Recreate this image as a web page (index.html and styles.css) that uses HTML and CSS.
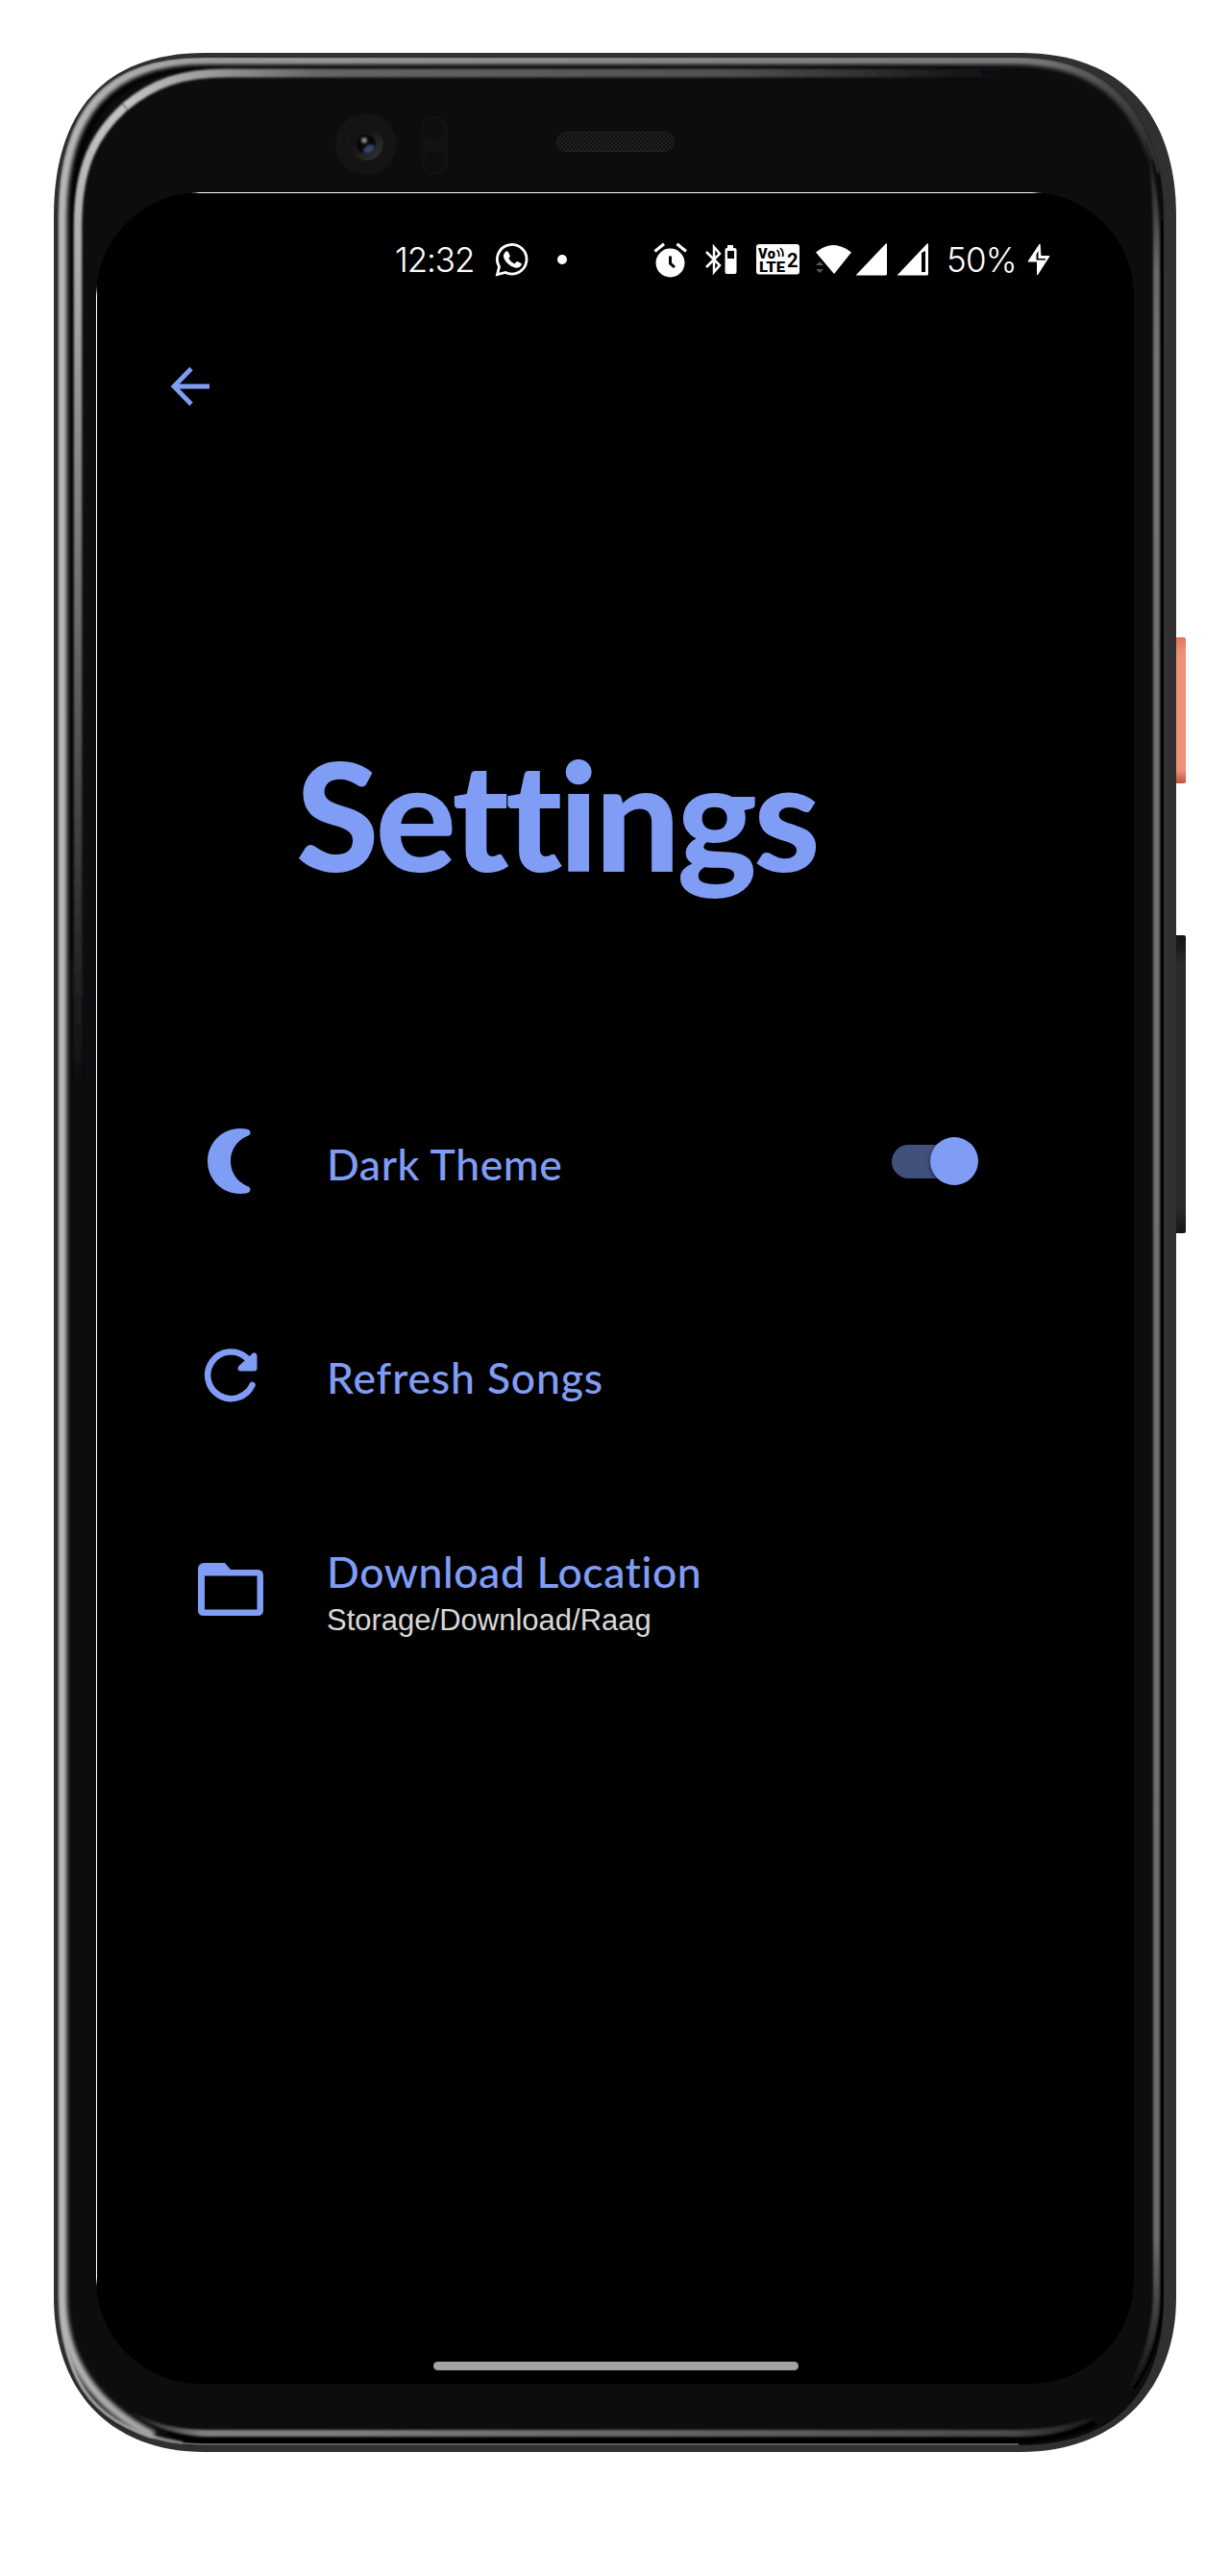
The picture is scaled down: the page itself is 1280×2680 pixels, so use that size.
FILE: index.html
```html
<!DOCTYPE html>
<html lang="en">
<head>
<meta charset="utf-8">
<title>Settings</title>
<link rel="stylesheet" href="styles.css">
</head>
<body>
<div class="stage">
  <svg class="frame" viewBox="0 0 1280 2680" width="1280" height="2680" aria-hidden="true">
    <defs>
      <filter id="soft" filterUnits="userSpaceOnUse" x="0" y="0" width="1280" height="2680"><feGaussianBlur stdDeviation="2.2"/></filter>
      <filter id="soft1" filterUnits="userSpaceOnUse" x="0" y="0" width="1280" height="2680"><feGaussianBlur stdDeviation="0.8"/></filter>
      <linearGradient id="leftBand" gradientUnits="userSpaceOnUse" x1="0" y1="105" x2="0" y2="1130">
        <stop offset="0" stop-color="#c4c4c4"/><stop offset=".24" stop-color="#a0a0a0"/><stop offset=".55" stop-color="#686868"/><stop offset="1" stop-color="#0d0d0f"/>
      </linearGradient>
      <linearGradient id="topBand" gradientUnits="userSpaceOnUse" x1="130" y1="0" x2="1040" y2="0">
        <stop offset="0" stop-color="#c4c4c4"/><stop offset=".1" stop-color="#999"/><stop offset=".22" stop-color="#666"/><stop offset=".7" stop-color="#505050"/><stop offset="1" stop-color="#0d0d0f"/>
      </linearGradient>
      <linearGradient id="rim" gradientUnits="userSpaceOnUse" x1="60" y1="0" x2="1195" y2="0">
        <stop offset="0" stop-color="#b8b8b8"/><stop offset=".15" stop-color="#999"/><stop offset=".9" stop-color="#777"/><stop offset="1" stop-color="#333"/>
      </linearGradient>
      <linearGradient id="rightBand" gradientUnits="userSpaceOnUse" x1="0" y1="140" x2="0" y2="2492">
        <stop offset="0" stop-color="#0d0d0f"/><stop offset=".06" stop-color="#69696b"/><stop offset=".1" stop-color="#747476"/><stop offset=".93" stop-color="#6c6c6e"/><stop offset="1" stop-color="#0d0d0f"/>
      </linearGradient>
      <linearGradient id="bottomBand" gradientUnits="userSpaceOnUse" x1="130" y1="0" x2="1152" y2="0">
        <stop offset="0" stop-color="#0d0d0f"/><stop offset=".08" stop-color="#808080"/><stop offset=".2" stop-color="#7e7e7e"/><stop offset=".9" stop-color="#4c4c4c"/><stop offset="1" stop-color="#0d0d0f"/>
      </linearGradient>
      <linearGradient id="coral" x1="0" y1="0" x2="0" y2="1">
        <stop offset="0" stop-color="#e2755f"/><stop offset=".11" stop-color="#ef9179"/><stop offset=".91" stop-color="#ef9179"/><stop offset="1" stop-color="#b95443"/>
      </linearGradient>
      <linearGradient id="ink" x1="0" y1="0" x2="0" y2="1">
        <stop offset="0" stop-color="#121212"/><stop offset=".1" stop-color="#2b2b2b"/><stop offset=".91" stop-color="#2b2b2b"/><stop offset="1" stop-color="#141414"/>
      </linearGradient>
      <linearGradient id="lensRing" x1="0" y1="0" x2="1" y2="1"><stop offset=".3" stop-color="#121212"/><stop offset="1" stop-color="#35353a"/></linearGradient>
      <pattern id="mesh" width="4" height="4" patternUnits="userSpaceOnUse"><path fill="#0e0e0e" d="M0 0h4v4H0z"/><path fill="#222" d="M0 0h2v2H0zM2 2h2v2H2z"/></pattern>
      <clipPath id="inner"><path d="M60 225C60 110 110 60 213 60H1060C1160 60 1211 125 1211 225V2390C1211 2490 1160 2544 1060 2544H213C110 2544 60 2490 60 2390Z"/></clipPath>
    </defs>
    <rect x="1220" y="663" width="14" height="152" rx="2" fill="url(#coral)"/>
    <rect x="1220" y="973" width="14" height="310" rx="2" fill="url(#ink)"/>
    <path fill="#303030" d="M56 225C56 117 108 55 213 55H1062C1168 55 1224 119 1224 225V2390C1224 2488 1160 2551 1062 2551H213C115 2551 56 2488 56 2390Z"/>
    <g clip-path="url(#inner)" fill="none">
      <path fill="#0d0d0f" d="M50 50H1224V2560H50z"/>
      <path filter="url(#soft)" stroke="#030303" stroke-width="5" d="M76 1000V225C76 122 120 70 215 70H1000"/>
      <path filter="url(#soft)" stroke="url(#rim)" stroke-width="9" d="M160 2534C92 2500 65 2450 65 2390V225C65 118 113 62.500 213 62.500H1055C1140 63 1180 105 1200 165"/>
      <path filter="url(#soft1)" stroke="url(#rim)" stroke-width="3.500" d="M190 2542C100 2528 64 2480 64 2390V225C64 113 113 63 213 63H1058C1145 62 1190 110 1206 180"/>
      <path filter="url(#soft1)" stroke="#000" stroke-width="7" d="M175 2530C188 2536 205 2539 220 2539H1060C1090 2539 1120 2530 1140 2521"/>
      <path stroke="#777" stroke-width="1.5" d="M170 2539Q190 2543 213 2543H1060"/>
      <path filter="url(#soft1)" stroke="url(#leftBand)" stroke-width="8.5" d="M81 1130V235C81 174 98 140 130 111"/>
      <path filter="url(#soft1)" stroke="url(#topBand)" stroke-width="9" d="M130 111C160 86 190 76 235 76H1040"/>
      <path filter="url(#soft1)" fill="url(#rightBand)" d="M1192 145C1203 180 1207 220 1207 250V2390C1207 2435 1187 2475 1170 2494C1192 2450 1200 2420 1200 2380V250C1200 210 1198 175 1192 145Z"/>
      <path stroke="#020202" stroke-width="3" d="M1209.500 230V2390Q1209 2445 1180 2485"/>
      <path filter="url(#soft1)" fill="url(#bottomBand)" d="M130 2506C165 2524 188 2528 220 2528H1060C1100 2527 1125 2519 1152 2509C1120 2529 1095 2535 1060 2535H220C190 2535 160 2528 130 2506Z"/>
    </g>
    <circle cx="381" cy="150" r="32" fill="#141414"/>
    <circle cx="381.500" cy="150" r="17" fill="url(#lensRing)"/>
    <circle cx="381" cy="150" r="10" fill="#07070b"/>
    <ellipse cx="384" cy="155" rx="6.500" ry="4" transform="rotate(-30 384 155)" fill="#39446c" filter="url(#soft1)"/>
    <circle cx="379" cy="146" r="3" fill="#858585" filter="url(#soft1)"/>
    <rect x="438" y="120" width="28" height="62" rx="14" fill="#121212"/>
    <circle cx="452" cy="134" r="11" fill="#0e0e0e"/><circle cx="452" cy="168" r="11" fill="#0e0e0e"/>
    <rect x="579.500" y="137.500" width="122" height="20" rx="10" fill="url(#mesh)" stroke="#222"/>
  </svg>

  <main class="screen">
    <div class="status">
      <span class="time">12:32</span>
      <svg class="whatsapp" viewBox="0 0 36 36" width="36" height="36"><path fill="none" stroke="#fff" stroke-width="2.800" stroke-linejoin="miter" d="M2.500 33.500L4.500 25.500A15.300 15.300 0 1 1 11 31.500Z"/><path fill="#fff" d="M10.500 10.500q2-2 3.300-.5l2 4q.2 1-1.500 2.800 2 4 6 5.700l2-2q.8-.7 1.700-.2l3.400 1.700q.8.600.1 2-2 3.500-6.500 2.500Q11.500 23.500 9 15.500q-.4-3 1.500-5z"/></svg>
      <svg class="dot" viewBox="0 0 10 10" width="10" height="10"><circle cx="5" cy="5" r="5" fill="#fff"/></svg>
      <svg class="alarm" viewBox="0 0 36 37" width="36" height="37"><circle cx="17.500" cy="21.500" r="15" fill="#fff"/><path d="M1.500 9.500L11 1.800M34 9.500L24.500 1.800" stroke="#fff" stroke-width="3.200"/><path d="M17.500 14.500v7.500l4.500 4" fill="none" stroke="#000" stroke-width="3"/></svg>
      <svg class="bt" viewBox="0 0 34 32" width="34" height="32"><path d="M2 8l14 14-6 7V3l6 7L2 24" fill="none" stroke="#fff" stroke-width="2.500"/><path fill="#fff" fill-rule="evenodd" d="M24 1h6v3h1.500q2 0 2 2v23q0 2-2 2h-8q-2 0-2-2V6q0-2 2-2H24zM24 7v8h7V7z"/></svg>
      <svg class="volte" viewBox="0 0 45 32" width="45" height="32"><rect width="45" height="31.500" rx="3" fill="#fff"/><text x="2" y="14.500" class="volte-text" textLength="18">Vo</text><text x="3" y="28.500" class="volte-text" textLength="27" lengthAdjust="spacingAndGlyphs">LTE</text><text x="32" y="24" class="volte-num">2</text><path d="M21.500 6q3 3 2 7M25 4q4 4 2.500 9" fill="none" stroke="#000" stroke-width="1.700"/></svg>
      <svg class="wifi" viewBox="0 0 38 32" width="38" height="32"><path fill="#fff" d="M0 8.500Q18-6.500 37 8.500L19 31z"/><path fill="#555" d="M0 22l4-4 4 4zM0 26h8l-4 4z"/></svg>
      <svg class="signal" viewBox="0 0 34 34" width="34" height="34"><path fill="#fff" d="M.5 33.500L31.500.8q1.500-1.300 1.500.7v30.500q0 1.500-1.500 1.500z"/></svg>
      <svg class="signal2" viewBox="0 0 34 34" width="34" height="34"><path fill="#fff" fill-rule="evenodd" d="M.5 33.500L31.500.8q1.500-1.300 1.500.7v30.500q0 1.500-1.500 1.500zM26 10v20h4V8z"/></svg>
      <span class="percent">50%</span>
      <svg class="bolt" viewBox="0 0 24 34" width="24" height="34"><path fill="#fff" stroke="#fff" stroke-linejoin="round" d="M13 1L1 19h9.500v14L23 13.500h-9z"/><path fill="#000" d="M11.500 8v8H19v1.500h-9.500v-6z"/></svg>
    </div>

    <header class="appbar">
      <svg viewBox="0 0 42 42" width="42" height="42"><path fill="none" stroke="#809df6" stroke-width="4.800" d="M41 21H6M22 2.500L4 21l18 18.500"/></svg>
    </header>

    <h1 class="title">Settings</h1>

    <section class="list">
      <div class="row">
        <div class="icon"><svg viewBox="0 0 70 70" width="70" height="70"><path fill="#809df6" d="M35 1C16 1 1 16 1 35s15 34 34 34q5 0 8-1c3-1 3.500-5 .5-6.500C32 57 25 47 25 35S32 13 43.500 8.500C46.500 7 46 3 43 2q-3-1-8-1z" transform="translate(10 0)"/></svg></div>
        <div class="label single">Dark Theme</div>
        <div class="switch"><span class="track"></span><span class="knob"></span></div>
      </div>
      <div class="row">
        <div class="icon"><svg viewBox="0 0 70 70" width="70" height="70"><path fill="none" stroke="#809df6" stroke-width="6.500" stroke-linecap="round" d="M57.500 46A24.300 24.300 0 1 1 52 18"/><path fill="#809df6" stroke="#809df6" stroke-width="6" stroke-linejoin="round" d="M59.500 15.500V28.500H45.500z"/></svg></div>
        <div class="label single refresh">Refresh Songs</div>
      </div>
      <div class="row">
        <div class="icon folder"><svg viewBox="0 0 70 70" width="70" height="70"><path fill="#809df6" fill-rule="evenodd" d="M8 6h21l6 7h28q6 0 6 6v36q0 6-6 6H7q-6 0-6-6V13q0-7 7-7zM8 19.500v35h54.500v-35z"/></svg></div>
        <div class="texts">
          <div class="label">Download Location</div>
          <div class="path">Storage/Download/Raag</div>
        </div>
      </div>
    </section>

    <div class="home"></div>
  </main>
</div>
</body>
</html>
```
FILE: styles.css
```css
* { box-sizing: border-box; }
body { margin: 0; background: #fff; }
.stage { position: relative; width: 1280px; height: 2680px; padding: 200px 100px; overflow: hidden; }
.frame { position: absolute; top: 0; left: 0; }
.screen {
  position: relative;
  width: 1080px;
  height: 2280px;
  border-radius: 108px;
  display: flex;
  flex-direction: column;
  color: #809df6;
  background:
    linear-gradient(90deg, transparent, #fff 10px, #fff 878px, transparent) 98px 0 / 888px 1px no-repeat,
    linear-gradient(transparent, #fff 10px, #fff 2074px, transparent) 0 96px / 1px 2084px no-repeat,
    #000;
}
.status { display: flex; align-items: center; height: 140px; padding-left: 311px; color: #fff; font: 300 35px/40px Inter, sans-serif; }
.status > * { flex: none; }
.time { width: 81px; letter-spacing: -1.1px; white-space: nowrap; }
.whatsapp { margin-left: 23px; }
.dot { margin-left: 29px; }
.alarm { margin-left: 90px; }
.bt { margin-left: 17px; }
.volte { margin-left: 20px; }
.volte-text { font: 900 14.500px Roboto, sans-serif; }
.volte-num { font: 700 20px Roboto, sans-serif; }
.wifi { margin-left: 17px; }
.signal { margin-left: 3px; }
.signal2 { margin-left: 9px; }
.percent { margin-left: 18px; width: 75px; letter-spacing: -.8px; white-space: nowrap; }
.bolt { margin-left: 9px; }
.appbar { height: 124px; padding: 41px 0 0 77px; }
.appbar svg { display: block; }
.title { margin: 287px 0 0 208px; font: 900 157px/190px Lato, sans-serif; letter-spacing: -3.6px; white-space: nowrap; }
.list { display: flex; flex-direction: column; padding: 156px 0 0 105px; }
.row { display: flex; align-items: center; height: 222px; }
.icon { width: 70px; height: 70px; margin-right: 65px; flex: none; }
.icon svg { display: block; }
.folder { margin-top: 6px; }
.label { font: 500 44.500px/54px Lato, sans-serif; letter-spacing: .6px; white-space: nowrap; }
.refresh { letter-spacing: .85px; }
.single { padding-top: 5px; }
.texts { padding-top: 9px; }
.path { margin-top: 5px; font: 400 31px/38px "Liberation Sans", sans-serif; color: #d8d8d8; white-space: nowrap; }
.switch { display: flex; align-items: center; margin-left: auto; margin-right: 162px; }
.track { width: 80px; height: 35px; border-radius: 18px; background: #42507c; }
.knob { width: 50px; height: 50px; margin-left: -40px; border-radius: 50%; background: #809df6; box-shadow: 0 2px 5px #0008; }
.home { width: 380px; height: 9px; border-radius: 5px; background: #a3a3a3; margin: auto 0 14px 351px; }
```
